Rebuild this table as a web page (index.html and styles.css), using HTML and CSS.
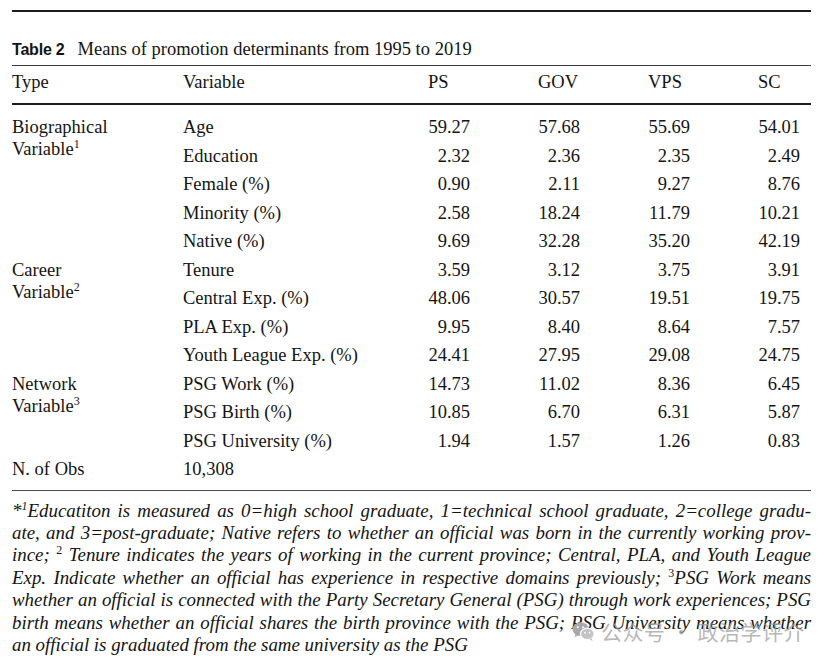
FILE: index.html
```html
<!DOCTYPE html>
<html lang="en">
<head>
<meta charset="utf-8">
<title>Table 2</title>
<link rel="stylesheet" href="styles.css">
</head>
<body>
<div class="page">
  <div class="top-rule"></div>
  <div class="caption"><span class="cap-label">Table 2</span><span class="cap-text">Means of promotion determinants from 1995 to 2019</span></div>
  <table class="data">
    <colgroup>
      <col class="c-type"><col class="c-var"><col class="c-num"><col class="c-num"><col class="c-num"><col class="c-last">
    </colgroup>
    <thead>
      <tr><th>Type</th><th>Variable</th><th>PS</th><th>GOV</th><th>VPS</th><th>SC</th></tr>
    </thead>
    <tbody>
      <tr class="first"><td class="type" rowspan="5">Biographical<br>Variable<sup>1</sup></td><td>Age</td><td class="n">59.27</td><td class="n">57.68</td><td class="n">55.69</td><td class="n last">54.01</td></tr>
      <tr><td>Education</td><td class="n">2.32</td><td class="n">2.36</td><td class="n">2.35</td><td class="n last">2.49</td></tr>
      <tr><td>Female (%)</td><td class="n">0.90</td><td class="n">2.11</td><td class="n">9.27</td><td class="n last">8.76</td></tr>
      <tr><td>Minority (%)</td><td class="n">2.58</td><td class="n">18.24</td><td class="n">11.79</td><td class="n last">10.21</td></tr>
      <tr><td>Native (%)</td><td class="n">9.69</td><td class="n">32.28</td><td class="n">35.20</td><td class="n last">42.19</td></tr>
      <tr><td class="type" rowspan="4">Career<br>Variable<sup>2</sup></td><td>Tenure</td><td class="n">3.59</td><td class="n">3.12</td><td class="n">3.75</td><td class="n last">3.91</td></tr>
      <tr><td>Central Exp. (%)</td><td class="n">48.06</td><td class="n">30.57</td><td class="n">19.51</td><td class="n last">19.75</td></tr>
      <tr><td>PLA Exp. (%)</td><td class="n">9.95</td><td class="n">8.40</td><td class="n">8.64</td><td class="n last">7.57</td></tr>
      <tr><td>Youth League Exp. (%)</td><td class="n">24.41</td><td class="n">27.95</td><td class="n">29.08</td><td class="n last">24.75</td></tr>
      <tr><td class="type" rowspan="3">Network<br>Variable<sup>3</sup></td><td>PSG Work (%)</td><td class="n">14.73</td><td class="n">11.02</td><td class="n">8.36</td><td class="n last">6.45</td></tr>
      <tr><td>PSG Birth (%)</td><td class="n">10.85</td><td class="n">6.70</td><td class="n">6.31</td><td class="n last">5.87</td></tr>
      <tr><td>PSG University (%)</td><td class="n">1.94</td><td class="n">1.57</td><td class="n">1.26</td><td class="n last">0.83</td></tr>
      <tr class="final"><td class="type">N. of Obs</td><td>10,308</td><td></td><td></td><td></td><td></td></tr>
    </tbody>
  </table>
  <div class="bottom-rule"></div>
  <div class="notes">
    <span class="ln">*<sup class="it">1</sup>Educatiton is measured as 0=high school graduate, 1=technical school graduate, 2=college gradu-</span>
    <span class="ln">ate, and 3=post-graduate; Native refers to whether an official was born in the currently working prov-</span>
    <span class="ln">ince; <sup class="up">2</sup> Tenure indicates the years of working in the current province; Central, PLA, and Youth League</span>
    <span class="ln">Exp. Indicate whether an official has experience in respective domains previously; <sup class="up">3</sup>PSG Work means</span>
    <span class="ln">whether an official is connected with the Party Secretary General (PSG) through work experiences; PSG</span>
    <span class="ln">birth means whether an official shares the birth province with the PSG; PSG University means whether</span>
    <span class="ln end">an official is graduated from the same university as the PSG</span>
  </div>
  <div class="watermark">
    <svg class="wm-icon" viewBox="0 0 24 22" width="23" height="21" aria-hidden="true">
      <ellipse cx="9" cy="8.5" rx="8.5" ry="7.3" fill="#a8a8a8"/>
      <path d="M3.5 13.5 L2.6 17 L6.8 14.8 Z" fill="#a8a8a8"/>
      <ellipse cx="16" cy="13.5" rx="7.2" ry="6" fill="#c4c4c4" stroke="#fff" stroke-width="1.2"/>
      <path d="M20.5 18 L21.6 21 L17.8 19.2 Z" fill="#c4c4c4"/>
      <circle cx="6" cy="6.5" r="1.1" fill="#fff"/>
      <circle cx="11.5" cy="6.5" r="1.1" fill="#fff"/>
      <circle cx="13.6" cy="12.2" r="0.9" fill="#fff"/>
      <circle cx="18.4" cy="12.2" r="0.9" fill="#fff"/>
    </svg>
    <span class="wm-text">公众号 · 政治学评介</span>
  </div>
</div>
</body>
</html>
```
FILE: styles.css
```css
html, body {
  margin: 0;
  padding: 0;
  background: #ffffff;
}
.page {
  position: relative;
  width: 799px;
  padding: 10px 19px 0 12px;
  color: #141414;
  font-family: "Liberation Serif", "Times New Roman", serif;
  font-size: 18.5px;
}
.top-rule {
  height: 2px;
  background: #1c1c1c;
}
.caption {
  padding-top: 26px;
  padding-bottom: 4px;
  line-height: 22px;
  border-bottom: 1px solid #3a3a3a;
  display: flex;
  align-items: baseline;
}
.cap-label {
  font-family: "Liberation Sans", Arial, sans-serif;
  font-weight: bold;
  font-size: 16px;
  letter-spacing: -0.2px;
  margin-right: 13px;
}
.cap-text {
  font-size: 18.5px;
}
.data {
  width: 799px;
  table-layout: fixed;
  border-collapse: collapse;
}
.c-type { width: 171px; }
.c-var { width: 245px; }
.c-num { width: 110px; }
.c-last { width: 53px; }
.data th {
  font-weight: normal;
  text-align: left;
  padding: 5px 0 10px 0;
  line-height: 22px;
  border-bottom: 2px solid #1c1c1c;
}
.data td {
  padding: 3.25px 0;
  line-height: 22px;
  vertical-align: top;
  white-space: nowrap;
}
.data tr.first td {
  padding-top: 11px;
}
.data tr.final td {
  padding-bottom: 10px;
}
.data td.n {
  text-align: right;
  padding-right: 68px;
}
.data td.n.last {
  padding-right: 11px;
}
.bottom-rule {
  height: 1px;
  background: #4a4a4a;
}
sup {
  font-size: 12px;
  line-height: 0;
  vertical-align: 7px;
}
.notes {
  padding-top: 8.5px;
  font-style: italic;
  font-size: 18.9px;
  line-height: 22.4px;
}
.notes .ln {
  display: block;
  text-align: justify;
  text-align-last: justify;
}
.notes .ln.end {
  text-align-last: left;
}
.notes sup.up {
  font-style: normal;
}
.watermark {
  position: absolute;
  left: 572px;
  top: 619px;
  display: flex;
  align-items: center;
  gap: 6px;
  pointer-events: none;
}
.wm-text {
  font-family: "Noto Sans CJK SC", sans-serif;
  font-size: 21px;
  line-height: 24px;
  color: rgba(160, 160, 160, 0.75);
  letter-spacing: 0.5px;
}
```
